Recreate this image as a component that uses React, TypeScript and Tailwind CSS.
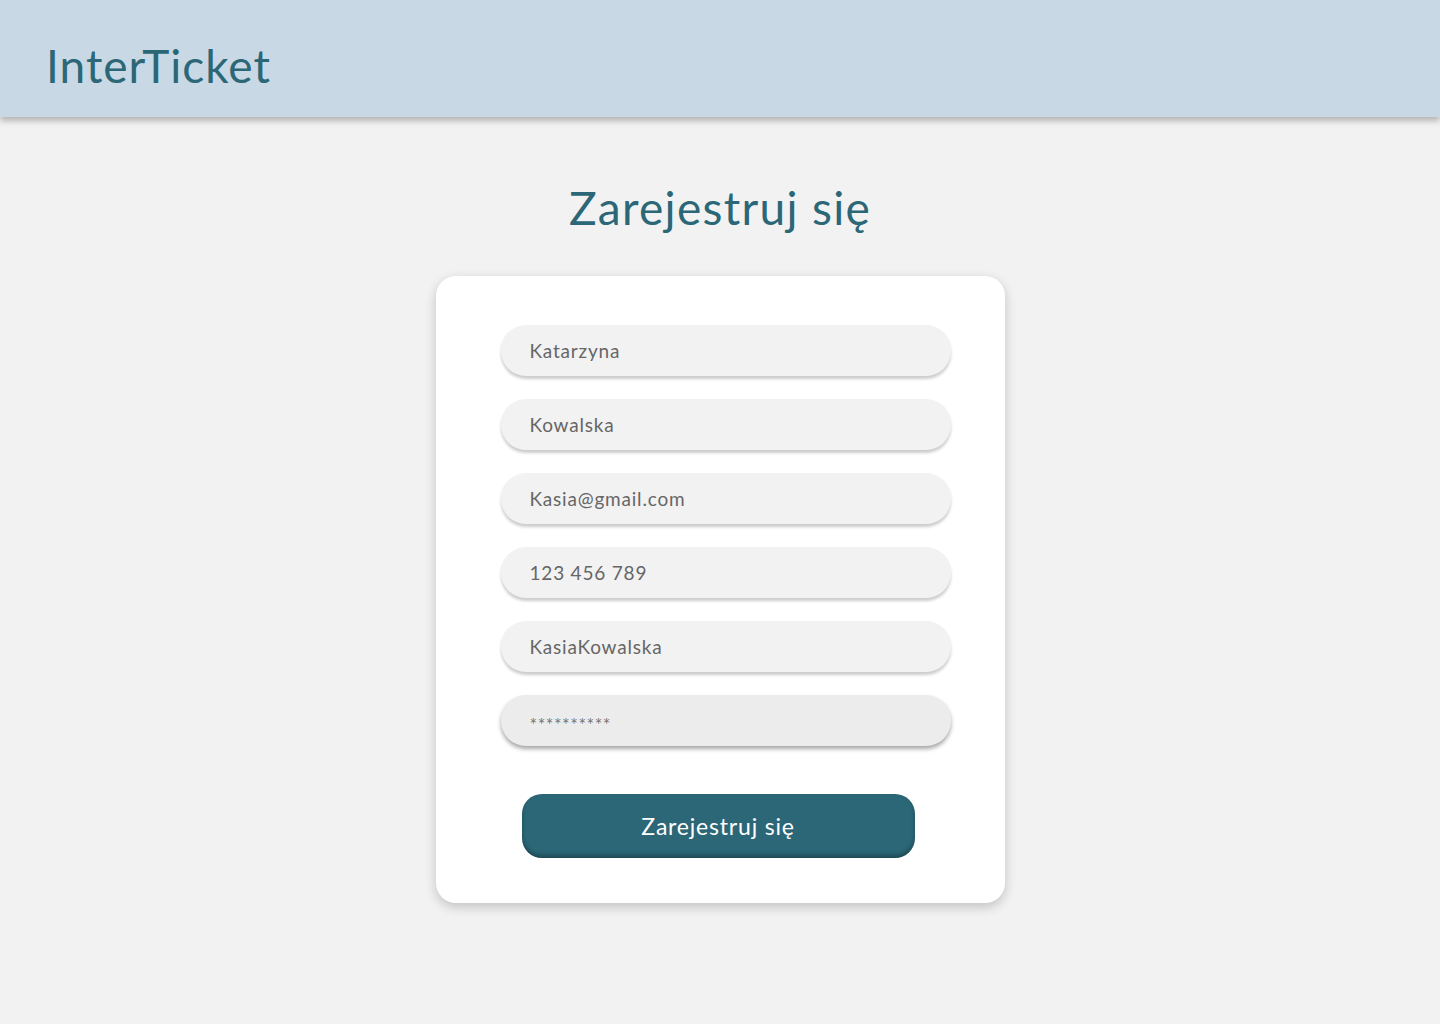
const fields = [
  { value: "Katarzyna" },
  { value: "Kowalska" },
  { value: "Kasia@gmail.com" },
  { value: "123 456 789" },
  { value: "KasiaKowalska" },
];

const App = () => {
  return (
    <div className="min-h-[1024px] bg-[#f2f2f2] font-['Lato',sans-serif]">
      <header className="h-[117px] bg-[#c8d8e4] shadow-[0_4px_6px_rgba(0,0,0,0.25)] flex items-center px-[46px]">
        <h1 className="text-[46px] tracking-[1px] text-[#2b6777] mt-[14px]">InterTicket</h1>
      </header>

      <main className="flex flex-col items-center">
        <h2 className="mt-[68px] text-[46px] tracking-[1.3px] text-[#2b6777] leading-none">Zarejestruj się</h2>

        <div className="mt-[45px] w-[569px] bg-white rounded-[20px] shadow-[0_4px_12px_rgba(0,0,0,0.2)] pl-[65px] pr-[54px] pt-[49px] pb-[45px]">
          <div className="flex flex-col gap-[23px]">
            {fields.map((f) => (
              <input
                key={f.value}
                defaultValue={f.value}
                className="h-[51px] w-full rounded-[25px] bg-[#f2f2f2] px-[29px] text-[19px] tracking-[0.8px] text-[#666] shadow-[0_3px_3px_rgba(0,0,0,0.2)] outline-none"
              />
            ))}
            <input
              defaultValue="**********"
              className="h-[51px] w-full rounded-[25px] bg-[#ececec] px-[29px] pt-[7px] text-[18px] tracking-[0.5px] text-[#777] shadow-[0_3px_4px_rgba(0,0,0,0.35)] outline-none"
            />
          </div>
          <div className="mt-[48px] pl-[21px]">
            <button className="h-[64px] w-[393px] rounded-[20px] bg-[#2b6777] text-[23px] tracking-[0.8px] text-white shadow-[inset_0_-3px_4px_rgba(0,0,0,0.3)]">
              Zarejestruj się
            </button>
          </div>
        </div>
      </main>
    </div>
  );
};

export default App;
